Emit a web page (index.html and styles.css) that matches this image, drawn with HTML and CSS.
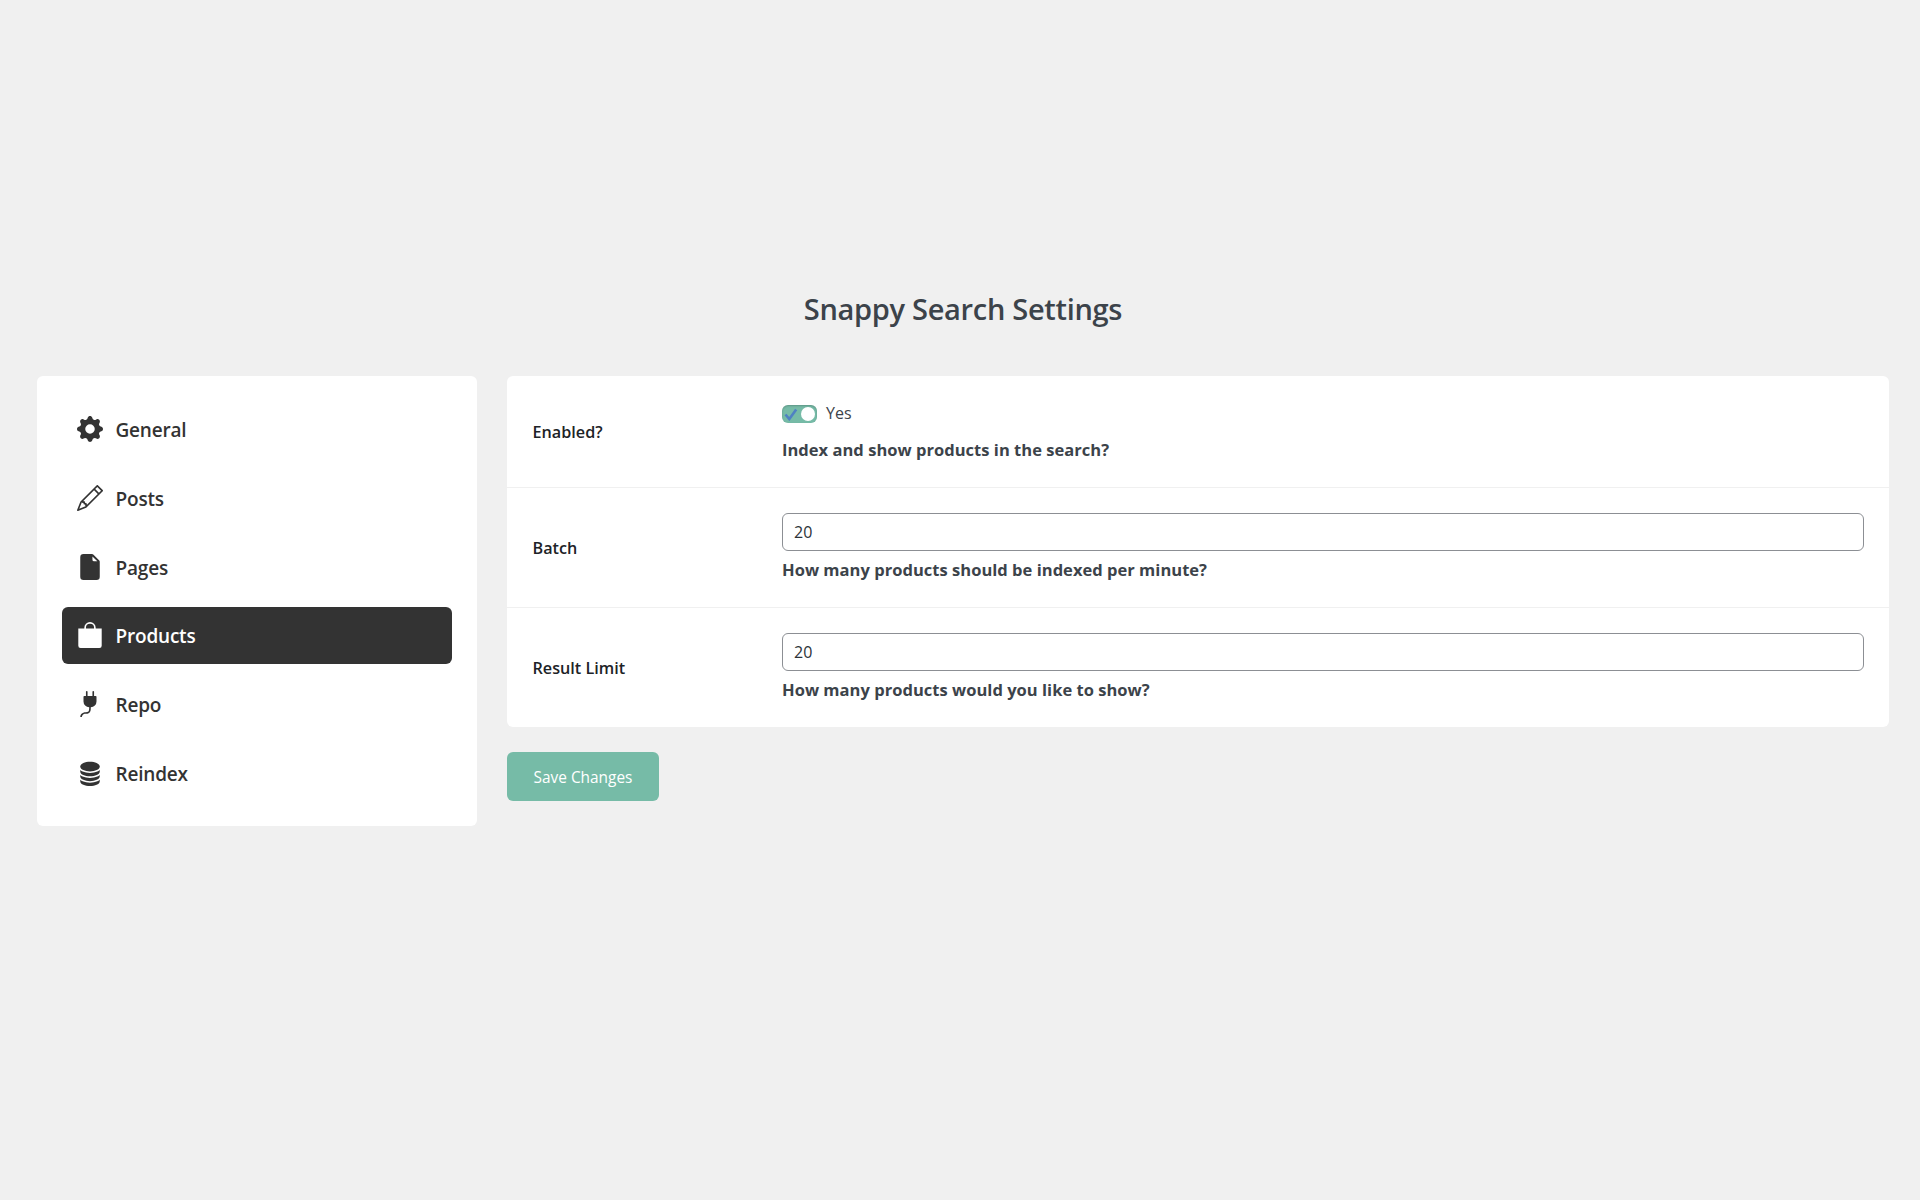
FILE: index.html
```html
<!DOCTYPE html>
<html lang="en">
<head>
<meta charset="utf-8">
<title>Snappy Search Settings</title>
<link rel="stylesheet" href="styles.css">
</head>
<body>
<div class="page">
  <h1 class="title">Snappy Search Settings</h1>
  <div class="layout">
    <nav class="sidebar">
      <a class="tab"><svg class="icon" viewBox="0 0 16 16"><path d="M9.405 1.05c-.413-1.4-2.397-1.4-2.81 0l-.1.34a1.464 1.464 0 0 1-2.105.872l-.31-.17c-1.283-.698-2.686.705-1.987 1.987l.169.311c.446.82.023 1.841-.872 2.105l-.34.1c-1.4.413-1.4 2.397 0 2.81l.34.1a1.464 1.464 0 0 1 .872 2.105l-.17.31c-.698 1.283.705 2.686 1.987 1.987l.311-.169a1.464 1.464 0 0 1 2.105.872l.1.34c.413 1.4 2.397 1.4 2.81 0l.1-.34a1.464 1.464 0 0 1 2.105-.872l.31.17c1.283.698 2.686-.705 1.987-1.987l-.169-.311a1.464 1.464 0 0 1 .872-2.105l.34-.1c1.4-.413 1.4-2.397 0-2.81l-.34-.1a1.464 1.464 0 0 1-.872-2.105l.17-.31c.698-1.283-.705-2.686-1.987-1.987l-.311.169a1.464 1.464 0 0 1-2.105-.872zM8 10.93a2.929 2.929 0 1 1 0-5.86 2.929 2.929 0 0 1 0 5.858z"/></svg><span>General</span></a>
      <a class="tab"><svg class="icon" viewBox="0 0 16 16"><path d="M12.146.146a.5.5 0 0 1 .708 0l3 3a.5.5 0 0 1 0 .708l-10 10a.5.5 0 0 1-.168.11l-5 2a.5.5 0 0 1-.65-.65l2-5a.5.5 0 0 1 .11-.168zM11.207 2.5 13.5 4.793 14.793 3.5 12.5 1.207zm1.586 3L10.5 3.207 4 9.707V10h.5a.5.5 0 0 1 .5.5v.5h.5a.5.5 0 0 1 .5.5v.5h.293zm-9.761 5.175-.106.106-1.528 3.821 3.821-1.528.106-.106A.5.5 0 0 1 5 12.5V12h-.5a.5.5 0 0 1-.5-.5V11h-.5a.5.5 0 0 1-.468-.325"/></svg><span>Posts</span></a>
      <a class="tab"><svg class="icon" viewBox="0 0 16 16"><path d="M4 0h5.293A1 1 0 0 1 10 .293L13.707 4a1 1 0 0 1 .293.707V14a2 2 0 0 1-2 2H4a2 2 0 0 1-2-2V2a2 2 0 0 1 2-2m5.5 1.5v2a1 1 0 0 0 1 1h2z"/></svg><span>Pages</span></a>
      <a class="tab tab-active"><svg class="icon" viewBox="0 0 16 16"><path d="M8 1a2.5 2.5 0 0 1 2.5 2.5V4h-5v-.5A2.5 2.5 0 0 1 8 1m3.5 3v-.5a3.5 3.5 0 1 0-7 0V4H.8v10.600a1.400 1.400 0 0 0 1.400 1.400h11.600a1.400 1.400 0 0 0 1.400-1.400V4z"/></svg><span>Products</span></a>
      <a class="tab"><svg class="icon" viewBox="0 0 16 16"><path d="M6 0a.5.5 0 0 1 .5.5V3h3V.5a.5.5 0 0 1 1 0V3h1a.5.5 0 0 1 .5.5v3A3.5 3.5 0 0 1 8.500 10c-.002.434-.01.845-.04 1.220-.041.514-.126 1.003-.317 1.424a2.080 2.080 0 0 1-.97 1.028C6.725 13.9 6.169 14 5.5 14c-.998 0-1.610.33-1.974.718A1.920 1.920 0 0 0 3 16H2c0-.616.232-1.367.797-1.968C3.374 13.420 4.261 13 5.500 13c.581 0 .962-.088 1.218-.219.241-.123.4-.3.514-.55.121-.266.193-.621.230-1.090.027-.34.035-.718.037-1.141A3.500 3.500 0 0 1 4 6.500v-3a.5.5 0 0 1 .5-.5h1V.5A.5.5 0 0 1 6 0"/></svg><span>Repo</span></a>
      <a class="tab"><svg class="icon" viewBox="0 0 16 16"><path d="M3.904 1.777C4.978 1.289 6.427 1 8 1s3.022.289 4.096.777C13.125 2.245 14 2.993 14 4s-.875 1.755-1.904 2.223C11.022 6.711 9.573 7 8 7s-3.022-.289-4.096-.777C2.875 5.755 2 5.007 2 4s.875-1.755 1.904-2.223"/><path id="disk" d="M2 6.161V7c0 1.007.875 1.755 1.904 2.223C4.978 9.710 6.427 10 8 10s3.022-.289 4.096-.777C13.125 8.755 14 8.007 14 7v-.839c-.457.432-1.004.751-1.490.972C11.278 7.693 9.682 8 8 8s-3.278-.307-4.510-.867c-.486-.22-1.033-.54-1.490-.972"/><use href="#disk" y="3"/><use href="#disk" y="6"/></svg><span>Reindex</span></a>
    </nav>
    <main class="content">
      <div class="panel">
        <div class="row">
          <div class="label">Enabled?</div>
          <div class="field field-switch">
            <div class="switch-line"><div class="switch"><svg class="check" viewBox="0 0 14 14"><path d="M1.500 7.500 5.300 12 12.200 2.500"/></svg><i class="knob"></i></div><span class="yes">Yes</span></div>
            <p class="hint">Index and show products in the search?</p>
          </div>
        </div>
        <div class="row">
          <div class="label">Batch</div>
          <div class="field">
            <div class="input">20</div>
            <p class="hint">How many products should be indexed per minute?</p>
          </div>
        </div>
        <div class="row">
          <div class="label">Result Limit</div>
          <div class="field">
            <div class="input">20</div>
            <p class="hint">How many products would you like to show?</p>
          </div>
        </div>
      </div>
      <button class="save">Save Changes</button>
    </main>
  </div>
</div>
</body>
</html>
```
FILE: styles.css
```css
* { box-sizing: border-box; }
body {
  margin: 0;
  background: #f0f0f0;
  color: #3c434a;
  font-family: "Open Sans", "Noto Sans", sans-serif;
}
.page { padding: 286px 31px 0 37px; }
.title {
  margin: 0;
  height: 90px;
  line-height: 46px;
  text-align: center;
  font-size: 29px;
  font-weight: 600;
  letter-spacing: -.3px;
}
.layout { display: flex; align-items: flex-start; gap: 30px; }
.sidebar {
  width: 440px;
  height: 450px;
  padding: 24.6px 25px;
  display: flex;
  flex-direction: column;
  gap: 12px;
  background: #fff;
  border-radius: 6px;
}
.tab {
  height: 56.8px;
  flex: none;
  padding-left: 15px;
  display: flex;
  align-items: center;
  gap: 12.5px;
  border-radius: 6px;
  color: #333;
  font-size: 19px;
  font-weight: 600;
  letter-spacing: -.2px;
}
.tab span { padding-top: 2px; }
.tab-active { background: #333; color: #fff; }
.icon { width: 26px; height: 26px; fill: currentColor; }
.content { flex: 1; }
.panel { background: #fff; border-radius: 6px; }
.row { display: flex; align-items: center; height: 120px; padding: 0 25px; border-bottom: 1px solid #f0f0f0; }
.row:first-child { height: 112px; }
.row:last-child { height: 119px; border-bottom: 0; }
.label { width: 250px; padding-left: .5px; color: #1d2327; font-size: 16.2px; font-weight: 600; }
.field { flex: 1; padding-top: 2px; }
.field-switch { padding-top: 4px; }
.switch-line { display: flex; align-items: center; gap: 9px; height: 22px; }
.switch {
  width: 35px;
  height: 18px;
  padding: 2px;
  display: flex;
  align-items: center;
  justify-content: space-between;
  background: #76bba7;
  border-radius: 6px;
  box-shadow: inset 0 1px 2px rgba(0, 0, 0, .2);
}
.check { width: 14px; height: 14px; fill: none; stroke: #4f81c3; stroke-width: 2.6; }
.knob { width: 14px; height: 14px; border-radius: 50%; background: #fff; }
.yes { padding-bottom: 2px; font-size: 16px; }
.input {
  height: 38px;
  padding-left: 11px;
  display: flex;
  align-items: center;
  border: 1px solid #8c8f94;
  border-radius: 6px;
  color: #2c3338;
  font-size: 16px;
}
.hint { margin: 4px 0 0; line-height: 29px; font-size: 16.5px; font-weight: 700; letter-spacing: .03px; }
.field-switch .hint { margin-top: 10px; }
.save {
  display: block;
  width: 152px;
  height: 49px;
  margin: 25px 0 0;
  padding: 2px 0 0;
  border: 0;
  border-radius: 6px;
  background: #76bba7;
  color: #fff;
  font-family: inherit;
  font-size: 15.4px;
}
```
